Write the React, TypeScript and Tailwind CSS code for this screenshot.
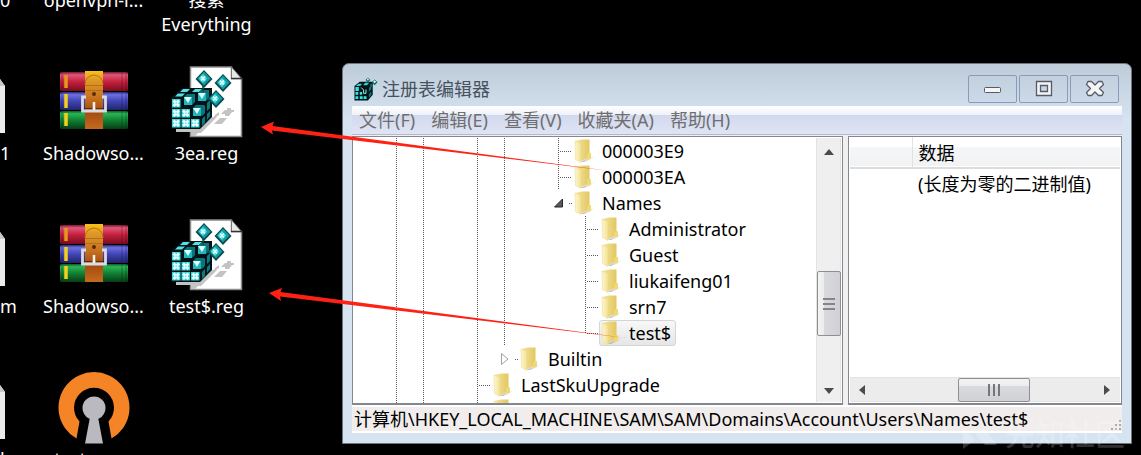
import React from "react";

type Guide = "blank" | "line" | "tee" | "elbow" | "open" | "closed";

const FONT = "font-['Noto_Sans','Noto_Sans_CJK_SC',sans-serif]";

function CubeFace({ x, y }: { x: number; y: number }) {
  return (
    <g>
      <rect x={x} y={y} width="8.5" height="8.5" fill="#35d5dc" />
      <path
        d={`M${x + 1.5} ${y + 1.5}l5.5 5.5M${x + 7} ${y + 1.5}l-5.5 5.5`}
        stroke="#f2ffff"
        strokeWidth="2.6"
      />
      <circle cx={x + 4.25} cy={y + 4.25} r="1" fill="#7eeaee" />
    </g>
  );
}

function Gem({ x, y }: { x: number; y: number }) {
  return (
    <g>
      <path d={`M${x} ${y - 9}l8.500 9-8.500 9-8.500-9z`} fill="#0a4a4f" />
      <path d={`M${x} ${y - 7.5}l6.500 7-6.500 7-6.500-7z`} fill="#119da5" />
      <path d={`M${x - 1} ${y - 5}l4 4.500-4 4.500-4-4.500z`} fill="#4fe3e8" />
      <path d={`M${x - 3} ${y - 2.5}l4 4M${x + 1} ${y - 2.5}l-4 4`} stroke="#f0ffff" strokeWidth="1.4" />
    </g>
  );
}

function Bevel({ x, y }: { x: number; y: number }) {
  return (
    <g>
      <path d={`M${x} ${y}l3-3h8v8l-3 3h-8z`} fill="#09737a" />
      <path d={`M${x} ${y}h8v8h-8z`} fill="#22b5bd" />
      <path d={`M${x} ${y}h7.500l-3.500 6z`} fill="#dcffff" />
    </g>
  );
}

function Cubes() {
  return (
    <g>
      <path d="M0 32L11 22H41V51L29 63H0z" fill="#021416" />
      <path d="M4 30.500l3-3h7l-3 3zM9 26l3-3h7l-3 3zM21 26l3-3h7l-3 3z" fill="#55e0e4" />
      <path d="M31 42l3-3v8l-3 3zM36 37l3-3v8l-3 3zM31 53l3-3v7l-3 3zM36 48l3-3v5l-3 4z" fill="#087b82" />
      <Bevel x={13} y={31} />
      <Bevel x={27} y={27} />
      <Bevel x={22} y={42} />
      <CubeFace x={1} y={33} />
      <CubeFace x={1} y={43} />
      <CubeFace x={1} y={53} />
      <CubeFace x={10.5} y={43} />
      <CubeFace x={10.5} y={53} />
      <CubeFace x={20} y={53} />
    </g>
  );
}

function RegFileIcon() {
  return (
    <svg viewBox="0 0 72 72" className="size-[72px]" aria-hidden="true">
      <path d="M19.500 1H60.500V12.500H70.500V70.500H19.500z" fill="#fff" stroke="#8b8b8b" strokeWidth="1.500" />
      <path d="M60.500 1l10 11.500h-10z" fill="#e8e8e8" stroke="#777" />
      <path d="M60 12.500h11" stroke="#333" strokeWidth="1.500" />
      <path d="M5 62H29L41 51H46L30 67H27L24 70H20V66H5z" fill="#c3c3c3" />
      <path d="M52 46l2-2h2v-2h4v2h3v2h-2l-3 4h-4v-2h-4zM43 58l6-6h7l-5 6zM44 49l4-3v3l-6 4z" fill="#c3c3c3" />
      <Cubes />
      <path d="M32 20v6" stroke="#0a4a4f" strokeWidth="1.500" />
      <Gem x={33} y={13} />
      <Gem x={52} y={17} />
      <Gem x={45} y={33} />
    </svg>
  );
}

function RegeditIcon() {
  return (
    <svg viewBox="0 0 50 50" className="size-6" aria-hidden="true">
      <path d="M1 19L12 10H39V37L29 49H1z" fill="#021416" />
      <path d="M4 19l5-5h8l-4 5zM19 17l4-5h9l-5 5z" fill="#39cfd2" />
      <path d="M31 23l5-6v8l-5 6zM31 36l5-6v7l-5 6z" fill="#087b82" />
      <path d="M3 21h7v8H3zM3 31h6v6H3zM12 31h5v6h-5zM3 40h6v6H3zM12 40h6v6h-6zM20 40h6v6h-6z" fill="#37e3e5" />
      <path d="M15 22l5 5v7h5v-8" stroke="#9ffcfc" strokeWidth="2" fill="none" />
      <path d="M29 1l5 5-5 5-5-5zM43 5l6 6-6 6-6-6zM36 13l4 4-4 5-4-5z" fill="#0b666c" />
      <path d="M29 2l2 3-2 3-2-3zM43 7l3 3-3 3-3-3z" fill="#e5ffff" />
    </svg>
  );
}

function RarIcon() {
  return (
    <svg viewBox="0 0 72 72" className="size-[72px]" aria-hidden="true">
      <defs>
        <linearGradient id="book-red" x2="0" y2="1">
          <stop offset="0" stopColor="#7c1630" />
          <stop offset=".15" stopColor="#e0577a" />
          <stop offset=".5" stopColor="#c6213f" />
          <stop offset="1" stopColor="#7b0c1f" />
        </linearGradient>
        <linearGradient id="book-blue" x2="0" y2="1">
          <stop offset="0" stopColor="#2b2c83" />
          <stop offset=".15" stopColor="#6d70df" />
          <stop offset=".5" stopColor="#4245b5" />
          <stop offset="1" stopColor="#22246e" />
        </linearGradient>
        <linearGradient id="book-green" x2="0" y2="1">
          <stop offset="0" stopColor="#0a5d25" />
          <stop offset=".15" stopColor="#2bb555" />
          <stop offset=".5" stopColor="#128235" />
          <stop offset="1" stopColor="#073d16" />
        </linearGradient>
        <linearGradient id="belt" x2="0" y2="1">
          <stop offset="0" stopColor="#f7c21c" />
          <stop offset=".15" stopColor="#e09a25" />
          <stop offset=".45" stopColor="#c87420" />
          <stop offset=".7" stopColor="#a34a10" />
          <stop offset="1" stopColor="#c46a1e" />
        </linearGradient>
      </defs>
      <rect x="2" y="6" width="68" height="19" rx="1.500" fill="url(#book-red)" />
      <rect x="2" y="26" width="68" height="18" rx="1.500" fill="url(#book-blue)" />
      <rect x="2" y="45" width="68" height="18" rx="1.500" fill="url(#book-green)" />
      <path d="M4 6v57M68 6v57M64 6v57" stroke="#000" strokeOpacity=".18" strokeWidth="1.500" />
      <path d="M8 9v13" stroke="#e39a1c" strokeWidth="3.500" />
      <path d="M8 28v14M8 47v13" stroke="#f5cf1f" strokeWidth="3.500" />
      <rect x="27" y="5" width="18" height="58" fill="url(#belt)" />
      <path d="M27 19q0-9 9-10 9 1 9 10" fill="none" stroke="#b87314" />
      <path d="M27 19.500h18M27 24.500h18" stroke="#aa6815" strokeWidth=".8" />
      <circle cx="36" cy="28" r="2" fill="#5b2b06" />
      <path d="M28 31h-3.500v14h23v-14H44" fill="none" stroke="#d9dbe2" strokeWidth="2.800" />
      <path d="M36 36v8" stroke="#f3f3f6" strokeWidth="2.500" />
      <path d="M27 42.500h7M38 42.500h7" stroke="#5e2a08" strokeWidth="1" />
    </svg>
  );
}

function OpenVpnIcon() {
  return (
    <svg viewBox="0 0 72 72" className="size-[72px]" aria-hidden="true">
      <path d="M18.500 66.500A35.500 35.500 0 1 1 53.500 66.500L50.500 49.500A20 20 0 1 0 21.500 49.500z" fill="#f58426" />
      <circle cx="36" cy="36" r="11.500" fill="#b9b9bf" />
      <path d="M32 45h8l5 26.500H27z" fill="#b9b9bf" />
    </svg>
  );
}

function PageEdge() {
  return (
    <svg viewBox="0 0 6 72" className="h-[72px] w-[6px]" aria-hidden="true">
      <path d="M0 13l5 7v47H0z" fill="#ececec" />
      <path d="M0 13l5 7H0z" fill="#c9c9c9" />
    </svg>
  );
}

function Folder() {
  return (
    <svg viewBox="0 0 21 24" className="h-6 w-[21px] shrink-0" aria-hidden="true">
      <defs>
        <linearGradient id="folder-back">
          <stop offset="0" stopColor="#f6e7a0" />
          <stop offset="1" stopColor="#e2c660" />
        </linearGradient>
        <linearGradient id="folder-front">
          <stop offset="0" stopColor="#fdf6cf" />
          <stop offset="1" stopColor="#f5e194" />
        </linearGradient>
        <linearGradient id="folder-shadow">
          <stop offset="0" stopColor="#8f8f8f" stopOpacity=".7" />
          <stop offset="1" stopColor="#c8c8c8" stopOpacity="0" />
        </linearGradient>
      </defs>
      <path d="M7 23l9-6 5 .5-4 3-7 2.500z" fill="url(#folder-shadow)" />
      <path d="M1 2l7-1.500h7.500V18l-9 4.500z" fill="url(#folder-back)" />
      <path d="M13 14.500l4-.5v5.500l-3.500 1.500z" fill="#f0d970" />
      <path d="M1 2l6 2.500V23.500L1.500 20.500z" fill="url(#folder-front)" stroke="#ead68c" strokeWidth=".5" />
    </svg>
  );
}

function DesktopItem({ icon, label }: { icon: React.ReactNode; label: string }) {
  return (
    <a href="#" className="flex flex-col items-center gap-[3px] text-center text-[18px] leading-6 text-white">
      <span className="h-[72px]">{icon}</span>
      <span className="w-28 px-1">{label}</span>
    </a>
  );
}

function EdgeItem({ label }: { label: string }) {
  return (
    <a href="#" className="flex flex-col items-start gap-[3px] text-[18px] leading-6 text-white">
      <PageEdge />
      <span>{label}</span>
    </a>
  );
}

const DOTS_V = "w-px bg-[repeating-linear-gradient(to_bottom,#5a5a5a_0_1px,transparent_1px_2px)]";
const DOTS_H = "h-px bg-[repeating-linear-gradient(to_right,#5a5a5a_0_1px,transparent_1px_2px)]";

function GuideCell({ kind }: { kind: Guide }) {
  return (
    <span className="flex h-full w-[27px] shrink-0 items-center">
      {(kind === "line" || kind === "tee") && <span className={`ml-[13px] h-full ${DOTS_V}`} />}
      {kind === "elbow" && <span className={`mb-auto ml-[13px] h-[14px] ${DOTS_V}`} />}
      {(kind === "tee" || kind === "elbow") && <span className={`ml-px flex-1 ${DOTS_H}`} />}
      {(kind === "open" || kind === "closed") && (
        <>
          <svg viewBox="0 0 12 14" className="ml-2 h-[14px] w-3" aria-hidden="true">
            {kind === "open" ? (
              <path d="M9.500 3v8H1.500z" fill="#595959" stroke="#262626" />
            ) : (
              <path d="M2.500 1.500l6.500 5.500-6.500 5.500z" fill="#fff" stroke="#a0a0a0" />
            )}
          </svg>
          <span className={`ml-auto w-[3px] ${DOTS_H}`} />
        </>
      )}
    </span>
  );
}

const base: Guide[] = ["line", "line", "blank", "line"];
const rows: { name: string; guides: Guide[]; selected?: boolean }[] = [
  { name: "000003E9", guides: [...base, "line", "blank", "tee"] },
  { name: "000003EA", guides: [...base, "line", "blank", "tee"] },
  { name: "Names", guides: [...base, "line", "blank", "open"] },
  { name: "Administrator", guides: [...base, "line", "blank", "blank", "tee"] },
  { name: "Guest", guides: [...base, "line", "blank", "blank", "tee"] },
  { name: "liukaifeng01", guides: [...base, "line", "blank", "blank", "tee"] },
  { name: "srn7", guides: [...base, "line", "blank", "blank", "tee"] },
  { name: "test$", guides: [...base, "line", "blank", "blank", "elbow"], selected: true },
  { name: "Builtin", guides: [...base, "closed"] },
  { name: "LastSkuUpgrade", guides: ["line", "line", "blank", "tee"] },
  { name: "", guides: ["line", "line", "blank", "line"] },
];

function Tree() {
  return (
    <ul className="min-w-0 flex-1 overflow-hidden pt-px pl-[30px]">
      {rows.map((row) => (
        <li key={row.name} className="flex h-[26px] items-center">
          {row.guides.map((g, i) => (
            <GuideCell key={i} kind={g} />
          ))}
          <button
            type="button"
            aria-label={row.name || "Folder"}
            className={
              "flex h-[26px] items-center gap-[7px] rounded-[3px] border pr-1 pl-px whitespace-nowrap " +
              (row.selected
                ? "border-[#d5d5d5] bg-linear-to-b from-[#f8f8f8] to-[#e6e6e6]"
                : "border-transparent")
            }
          >
            <Folder />
            {row.name}
          </button>
        </li>
      ))}
    </ul>
  );
}

function Arrow({ d, label }: { d: string; label: string }) {
  return (
    <button type="button" aria-label={label} className="flex size-6 items-center justify-center">
      <svg viewBox="0 0 12 12" className="size-3" aria-hidden="true">
        <path d={d} fill="#4b4b4b" />
      </svg>
    </button>
  );
}

function VerticalScrollbar() {
  return (
    <div className="my-px mr-px flex w-[25px] shrink-0 flex-col items-center justify-between border-x border-[#e3e3e3] bg-[#efefef] pt-0.5">
      <Arrow d="M1 9l5-6 5 6z" label="Scroll up" />
      <button
        type="button"
        aria-label="Vertical scroll position"
        className="mt-[107px] mb-auto flex h-[65px] w-6 flex-col items-center justify-center gap-[3px] rounded-[2px] border border-[#8e8e93] bg-[linear-gradient(to_right,#f3f3f3_0,#ececec_6px,#d9dadd_6px,#d0d0d4_24px)]"
      >
        <span className="h-0.5 w-3 bg-[#858589]" />
        <span className="h-0.5 w-3 bg-[#858589]" />
        <span className="h-0.5 w-3 bg-[#858589]" />
      </button>
      <Arrow d="M1 4h10l-5 6z" label="Scroll down" />
    </div>
  );
}

function HorizontalScrollbar() {
  return (
    <div className="mx-px mb-px flex h-[25px] items-center justify-between border-y border-[#e3e3e3] bg-[#ececec]">
      <Arrow d="M9 1v10L3 6z" label="Scroll left" />
      <button
        type="button"
        aria-label="Horizontal scroll position"
        className="mr-auto ml-[84px] flex h-6 w-[72px] items-center justify-center gap-[3px] rounded-[2px] border border-[#8e8e93] bg-[linear-gradient(#f3f3f3_0,#ececec_7px,#d9dadd_7px,#d0d0d4_24px)]"
      >
        <span className="h-3 w-0.5 bg-[#77777b]" />
        <span className="h-3 w-0.5 bg-[#77777b]" />
        <span className="h-3 w-0.5 bg-[#77777b]" />
      </button>
      <Arrow d="M2 1l6 5-6 5z" label="Scroll right" />
    </div>
  );
}

function CaptionButton({ label, children }: { label: string; children: React.ReactNode }) {
  return (
    <button
      type="button"
      aria-label={label}
      className="flex h-7 w-[49px] items-center justify-center rounded-[2px] border border-[#8a9bb9] bg-linear-to-b from-[#c3d0de] to-[#cbd9e8]"
    >
      <svg viewBox="0 0 20 18" className="h-[18px] w-5" fill="#f5f5f5" stroke="#555b6b" aria-hidden="true">
        {children}
      </svg>
    </button>
  );
}

const menus = ["文件(F)", "编辑(E)", "查看(V)", "收藏夹(A)", "帮助(H)"];

function RegistryEditor() {
  return (
    <main className="rounded-t-[7px] border border-[#6d7680] bg-[#d6e4f2] bg-linear-to-b from-[#becbd9] to-[#d6e4f2] bg-size-[100%_56px] bg-no-repeat px-[9px] pb-[10px]">
      <header className="flex h-[42px] items-start pr-[3px]">
        <div className="flex items-center gap-1 pt-[11px] pl-0.5 text-[18px] leading-7 text-[#47525e]">
          <RegeditIcon />
          <h1>注册表编辑器</h1>
        </div>
        <div className="ml-auto flex gap-0.5 pt-[11px]">
          <CaptionButton label="Minimize">
            <rect x="1.500" y="7.500" width="16" height="5" rx="1" />
          </CaptionButton>
          <CaptionButton label="Maximize">
            <path d="M2.500 1.500h15v14h-15zM6.500 5.500v6h7v-6z" fillRule="evenodd" strokeWidth="1.300" />
          </CaptionButton>
          <CaptionButton label="Close">
            <path
              d="M3 1.500h3.500L10 5l3.500-3.500H17l1.500 3L14.500 8.500l4 4-1.500 3h-3.500L10 12l-3.500 3.500H3l-1.500-3 4-4-4-4z"
              strokeLinejoin="round"
              strokeWidth="1.300"
            />
          </CaptionButton>
        </div>
      </header>
      <nav className="flex h-[29px] items-center gap-4 border-b border-[#b3b8cc] bg-[linear-gradient(#ffffff_0,#edf1f9_9px,#d3d9ed_9px,#dfe4f5_28px)] px-[7px] text-[18px] text-[#6f6f6f]">
        {menus.map((m) => (
          <button key={m} type="button" className="whitespace-nowrap">
            {m}
          </button>
        ))}
      </nav>
      <div className="flex gap-[5px] bg-[#f0f0f0] pt-px text-[18px] leading-6 text-black">
        <section className="flex h-[269px] min-w-0 flex-[491] border border-b-2 border-[#828790] bg-white">
          <Tree />
          <VerticalScrollbar />
        </section>
        <section className="flex h-[269px] min-w-0 flex-[273] flex-col border border-b-2 border-[#828790] bg-white">
          <table className="mx-px w-auto table-fixed text-left">
            <thead>
              <tr className="h-[31px] border-b-2 border-[#dcdcdc] bg-[linear-gradient(#ffffff_0,#ffffff_10px,#f5f6f8_10px,#f1f2f4_30px)]">
                <th className="w-[62px] border-r border-[#e0e1e4]" aria-label="类型" />
                <th className="pt-0.5 pl-1.5 font-normal">数据</th>
              </tr>
            </thead>
            <tbody>
              <tr className="h-[30px]">
                <td />
                <td className="pl-1.5 whitespace-nowrap">(长度为零的二进制值)</td>
              </tr>
            </tbody>
          </table>
          <div className="mt-auto">
            <HorizontalScrollbar />
          </div>
        </section>
      </div>
      <footer className="flex h-7 items-center justify-between border-y-2 border-white bg-[#f1edec] pl-0.5 text-[18px] leading-6 text-black">
        <span className="min-w-0 overflow-hidden whitespace-nowrap">
          计算机\HKEY_LOCAL_MACHINE\SAM\SAM\Domains\Account\Users\Names\test$
        </span>
        <svg viewBox="0 0 12 12" className="size-3 shrink-0 self-end" fill="#adabaa" aria-hidden="true">
          <path d="M9 1h2v2H9zM9 5h2v2H9zM9 9h2v2H9zM5 5h2v2H5zM5 9h2v2H5zM1 9h2v2H1z" />
        </svg>
      </footer>
    </main>
  );
}

export default function App() {
  return (
    <div className={`relative flex h-screen items-start overflow-hidden bg-black ${FONT}`}>
      <div className="-mt-[87px] grid w-[342px] shrink-0 auto-rows-[153px] grid-cols-[37px_113px_113px]">
        <EdgeItem label="0" />
        <DesktopItem icon={null} label="openvpn-i..." />
        <DesktopItem icon={null} label="搜索 Everything" />
        <EdgeItem label="1" />
        <DesktopItem icon={<RarIcon />} label="Shadowso..." />
        <DesktopItem icon={<RegFileIcon />} label="3ea.reg" />
        <EdgeItem label="m" />
        <DesktopItem icon={<RarIcon />} label="Shadowso..." />
        <DesktopItem icon={<RegFileIcon />} label="test$.reg" />
        <EdgeItem label="l" />
        <DesktopItem icon={<OpenVpnIcon />} label="test.ovpn" />
      </div>
      <div className="mt-[63px] mr-[9px] min-w-0 flex-1">
        <RegistryEditor />
      </div>
      <svg viewBox="0 0 640 340" className="pointer-events-none absolute top-0 left-0 h-[340px] w-[640px]" fill="#ff2113" aria-hidden="true">
        <path d="M261 127L274 121.500 272.500 126 610 171 272 130.500 273 134.500z" />
        <path d="M269 293L282 288 280.500 292 626 338 280 296.500 281 301z" />
      </svg>
      <div className="pointer-events-none absolute right-4 bottom-[3px] flex items-center gap-2 text-[30px] leading-9 font-medium text-white/20" aria-hidden="true">
        <svg viewBox="0 0 34 30" className="h-[30px] w-[34px]" fill="currentColor">
          <path d="M0 30V8l12 13zM8 10h14L34 26H22z" />
        </svg>
        <span>先知社区</span>
      </div>
    </div>
  );
}
